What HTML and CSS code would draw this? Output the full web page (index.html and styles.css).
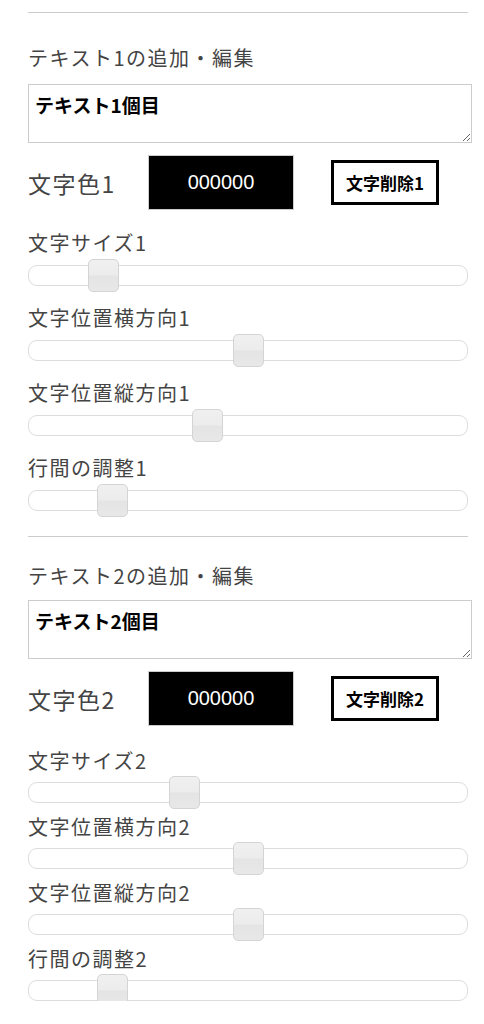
FILE: index.html
```html
<!DOCTYPE html>
<html lang="ja">
<head>
    <meta charset="UTF-8">
    <meta name="viewport" content="width=device-width, initial-scale=1.0">
    <title>テキスト編集</title>
    <link rel="stylesheet" href="styles.css">
</head>
<body>
    <div class="container">
        <hr class="divider">
        <div class="text-block">
            <h3 class="block-title">テキスト1の追加・編集</h3>
            <textarea class="text-input" id="text1">テキスト1個目</textarea>
            <div class="color-row">
                <span class="color-label">文字色1</span>
                <input type="text" class="color-box" id="color1" value="000000">
                <button type="button" class="delete-btn" id="delete1">文字削除1</button>
            </div>
            <div class="slider-group">
                <label for="size1">文字サイズ1</label>
                <input type="range" id="size1" min="10" max="100" value="23">
            </div>
            <div class="slider-group">
                <label for="posX1">文字位置横方向1</label>
                <input type="range" id="posX1" min="0" max="100" value="50">
            </div>
            <div class="slider-group">
                <label for="posY1">文字位置縦方向1</label>
                <input type="range" id="posY1" min="0" max="100" value="40">
            </div>
            <div class="slider-group">
                <label for="lineHeight1">行間の調整1</label>
                <input type="range" id="lineHeight1" min="0" max="3" step="0.1" value="0.5">
            </div>
        </div>

        <hr class="divider">
        <div class="text-block compact">
            <h3 class="block-title">テキスト2の追加・編集</h3>
            <textarea class="text-input" id="text2">テキスト2個目</textarea>
            <div class="color-row">
                <span class="color-label">文字色2</span>
                <input type="text" class="color-box" id="color2" value="000000">
                <button type="button" class="delete-btn" id="delete2">文字削除2</button>
            </div>
            <div class="slider-group">
                <label for="size2">文字サイズ2</label>
                <input type="range" id="size2" min="10" max="100" value="41">
            </div>
            <div class="slider-group">
                <label for="posX2">文字位置横方向2</label>
                <input type="range" id="posX2" min="0" max="100" value="50">
            </div>
            <div class="slider-group">
                <label for="posY2">文字位置縦方向2</label>
                <input type="range" id="posY2" min="0" max="100" value="50">
            </div>
            <div class="slider-group">
                <label for="lineHeight2">行間の調整2</label>
                <input type="range" id="lineHeight2" min="0" max="3" step="0.1" value="0.5">
            </div>
        </div>
    </div>
</body>
</html>
```

FILE: styles.css
```css
body {
    font-family: "Noto Sans CJK JP", "Noto Sans", sans-serif;
    background-color: #fff;
    color: #444;
    margin: 0;
}
.container {
    padding: 12px 0 0 28px;
    width: 440px;
}
.divider {
    border: none;
    border-top: 1px solid #ccc;
    margin: 0;
}
.text-block + .divider {
    margin-top: 25px;
}
.block-title {
    font-size: 20px;
    font-weight: normal;
    letter-spacing: 1.5px;
    line-height: 28px;
    margin: 31px 0 12px;
}
.compact .block-title {
    margin-top: 25px;
    margin-bottom: 10px;
}
.text-input {
    display: block;
    box-sizing: border-box;
    width: 444px;
    height: 59px;
    padding: 8px 6px;
    border: 1px solid #ccc;
    font-family: "Noto Sans CJK JP", sans-serif;
    font-size: 19px;
    font-weight: bold;
    line-height: 24px;
    color: #000;
    resize: vertical;
}
.color-row {
    display: flex;
    align-items: center;
    margin-top: 12px;
}
.color-label {
    font-size: 23px;
    letter-spacing: 1.5px;
    width: 120px;
}
.color-box {
    box-sizing: border-box;
    width: 146px;
    height: 55px;
    background-color: #000;
    color: #fff;
    border: 1px solid #ccc;
    text-align: center;
    font-family: "Liberation Sans", Arial, sans-serif;
    font-size: 20px;
}
.delete-btn {
    box-sizing: border-box;
    margin-left: 37px;
    height: 45px;
    width: 108px;
    padding: 0;
    background-color: #fff;
    border: 3px solid #000;
    color: #000;
    font-family: "Noto Sans CJK JP", sans-serif;
    font-size: 17px;
    font-weight: bold;
    cursor: pointer;
}
.slider-group {
    margin-top: 19px;
}
.color-row + .slider-group {
    margin-top: 20px;
}
.slider-group label {
    display: block;
    font-size: 20px;
    letter-spacing: 1.5px;
    line-height: 26px;
}
.slider-group input[type="range"] {
    -webkit-appearance: none;
    appearance: none;
    display: block;
    width: 440px;
    height: 21px;
    margin: 9px 0 0;
    padding: 0;
    background: transparent;
}
.compact .slider-group {
    margin-top: 11px;
}
.compact .color-row + .slider-group {
    margin-top: 22px;
}
.compact .slider-group input[type="range"] {
    margin-top: 8px;
}
.slider-group input[type="range"]::-webkit-slider-runnable-track {
    box-sizing: border-box;
    height: 21px;
    background: #fff;
    border: 1px solid #ddd;
    border-radius: 9px;
}
.slider-group input[type="range"]::-webkit-slider-thumb {
    -webkit-appearance: none;
    box-sizing: border-box;
    width: 31px;
    height: 33px;
    margin-top: -7px;
    border: 1px solid #d4d4d4;
    border-radius: 5px;
    background: linear-gradient(#f0f0f0 0%, #ececec 48%, #e4e4e4 52%, #e8e8e8 100%);
}
```
